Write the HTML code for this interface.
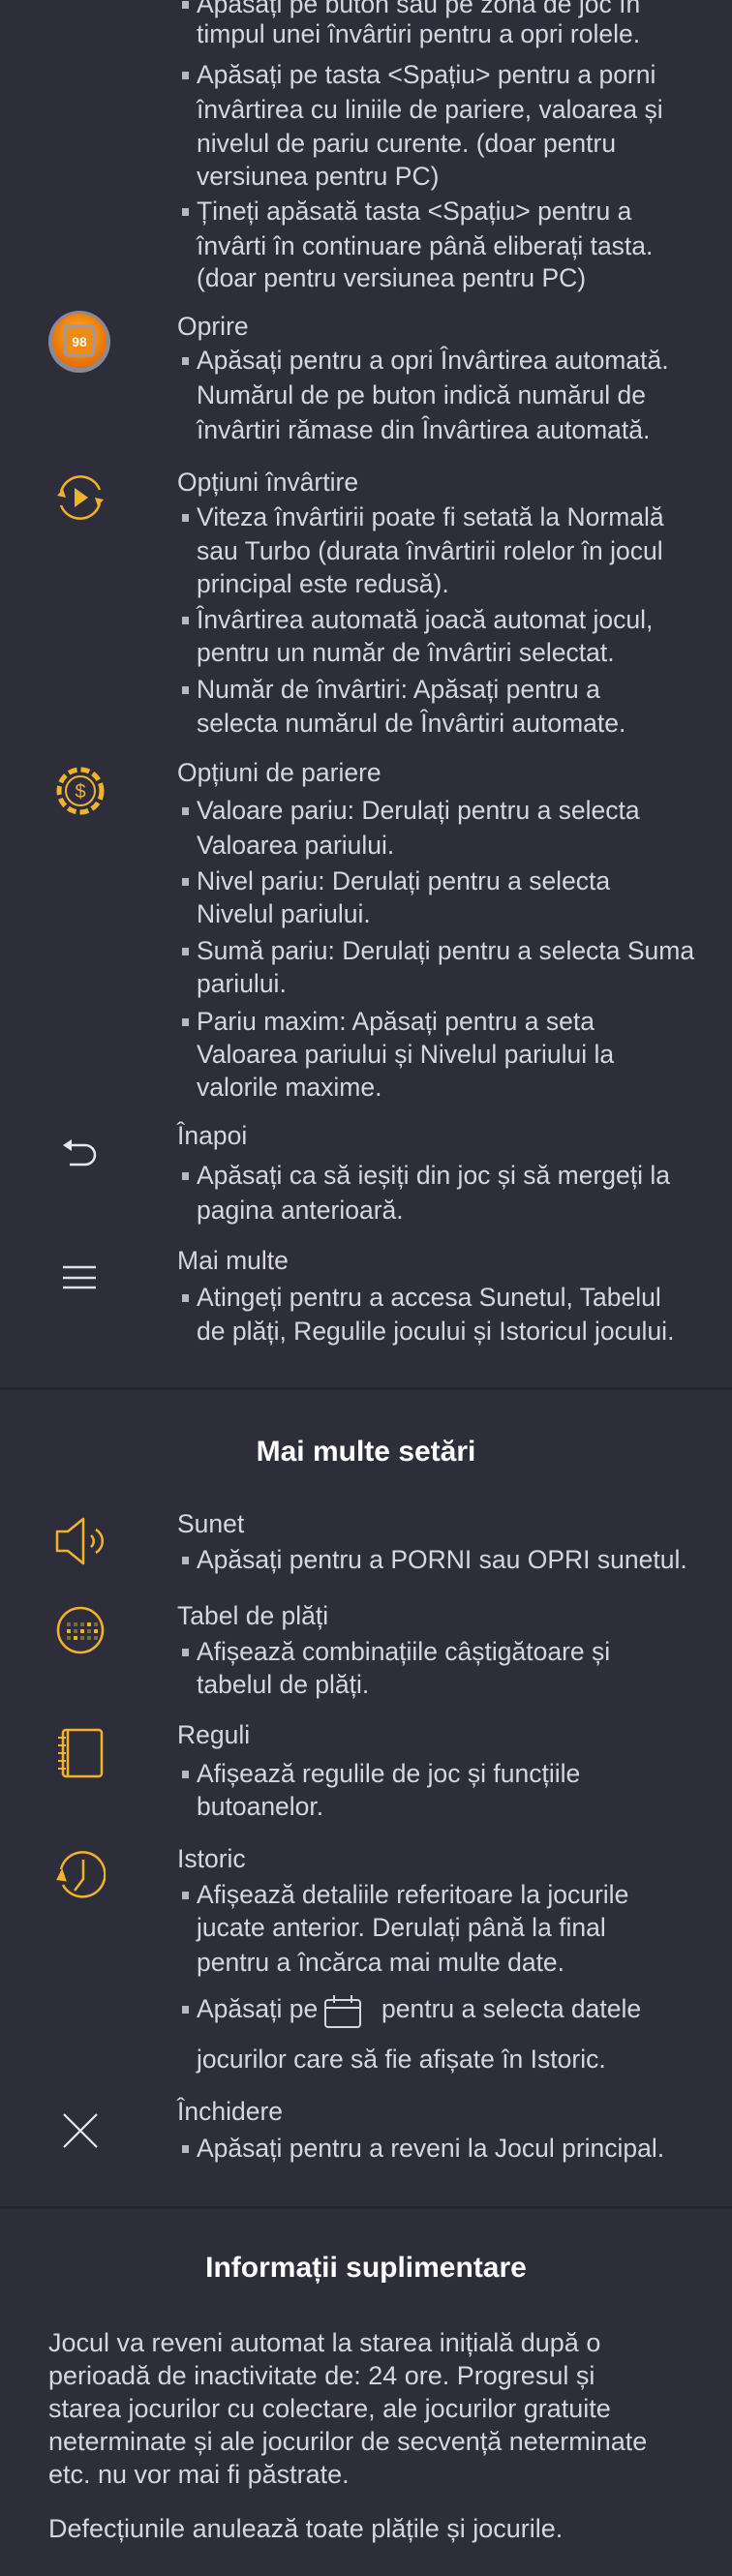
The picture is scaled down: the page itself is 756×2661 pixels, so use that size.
<!DOCTYPE html>
<html><head><meta charset="utf-8">
<style>
html,body{margin:0;padding:0;}
body{width:756px;height:2661px;background:#2e2e3b;position:relative;overflow:hidden;font-family:"Liberation Sans","DejaVu Sans",sans-serif;color:#d6d6dc;font-size:26.5px;}
.l{position:absolute;left:183px;height:35px;line-height:35px;white-space:nowrap;}
.b{left:203px;}
.b::before{content:"";position:absolute;left:-15px;top:14px;width:7px;height:8px;background:#b8b8c0;}
.p{position:absolute;left:50px;height:34px;line-height:34px;white-space:nowrap;font-size:27px;}
.h{position:absolute;left:0;width:756px;text-align:center;font-weight:bold;color:#fff;font-size:30px;line-height:36px;height:36px;}
.sep{position:absolute;left:0;width:756px;height:3px;background:#25252f;}
svg{position:absolute;}
</style></head><body>

<div class="l b" style="top:-13px">Apăsați pe buton sau pe zona de joc în</div>
<div class="l" style="top:18px;left:203px">timpul unei învârtiri pentru a opri rolele.</div>
<div class="l b" style="top:60px">Apăsați pe tasta &lt;Spațiu&gt; pentru a porni</div>
<div class="l" style="top:96px;left:203px">învârtirea cu liniile de pariere, valoarea și</div>
<div class="l" style="top:131px;left:203px">nivelul de pariu curente. (doar pentru</div>
<div class="l" style="top:165px;left:203px">versiunea pentru PC)</div>
<div class="l b" style="top:201px">Țineți apăsată tasta &lt;Spațiu&gt; pentru a</div>
<div class="l" style="top:237px;left:203px">învârti în continuare până eliberați tasta.</div>
<div class="l" style="top:270px;left:203px">(doar pentru versiunea pentru PC)</div>

<svg style="left:49px;top:320px" width="66" height="66" viewBox="0 0 66 66">
<defs><radialGradient id="og" cx="50%" cy="40%" r="60%"><stop offset="0" stop-color="#ffb02a"/><stop offset="1" stop-color="#e56a00"/></radialGradient></defs>
<circle cx="33" cy="33" r="32" fill="#8a8a96"/><circle cx="33" cy="32" r="28" fill="url(#og)"/>
<rect x="18" y="17" width="30" height="30" rx="4" fill="#f08a10" stroke="#9a9aa6" stroke-width="3"/>
<text x="33" y="38" text-anchor="middle" font-family="Liberation Sans" font-weight="bold" font-size="14" fill="#fff">98</text></svg>
<div class="l" style="top:320px">Oprire</div>
<div class="l b" style="top:355px">Apăsați pentru a opri Învârtirea automată.</div>
<div class="l" style="top:391px;left:203px">Numărul de pe buton indică numărul de</div>
<div class="l" style="top:427px;left:203px">învârtiri rămase din Învârtirea automată.</div>

<svg style="left:57px;top:488px" width="52" height="52" viewBox="0 0 52 52" fill="none" stroke="#f2b22e" stroke-width="2.5">
<path d="M6 20 A21 21 0 0 1 46 18"/><path d="M46 32 A21 21 0 0 1 6 34"/>
<path d="M2 24 L8 17 L11 26 Z" fill="#f2b22e" stroke="none"/><path d="M50 28 L44 35 L41 26 Z" fill="#f2b22e" stroke="none"/>
<path d="M20 16 L34 26 L20 36 Z" fill="#f2b22e" stroke="none"/></svg>
<div class="l" style="top:481px">Opțiuni învârtire</div>
<div class="l b" style="top:517px">Viteza învârtirii poate fi setată la Normală</div>
<div class="l" style="top:552px;left:203px">sau Turbo (durata învârtirii rolelor în jocul</div>
<div class="l" style="top:586px;left:203px">principal este redusă).</div>
<div class="l b" style="top:623px">Învârtirea automată joacă automat jocul,</div>
<div class="l" style="top:657px;left:203px">pentru un număr de învârtiri selectat.</div>
<div class="l b" style="top:695px">Număr de învârtiri: Apăsați pentru a</div>
<div class="l" style="top:730px;left:203px">selecta numărul de Învârtiri automate.</div>

<svg style="left:57px;top:791px" width="52" height="52" viewBox="0 0 52 52" fill="none">
<circle cx="26" cy="26" r="22" stroke="#f2b22e" stroke-width="5" stroke-dasharray="9 4"/>
<circle cx="26" cy="26" r="15" stroke="#f2b22e" stroke-width="2"/>
<text x="26" y="33" text-anchor="middle" font-family="Liberation Sans" font-size="20" fill="#f2b22e">$</text></svg>
<div class="l" style="top:781px">Opțiuni de pariere</div>
<div class="l b" style="top:820px">Valoare pariu: Derulați pentru a selecta</div>
<div class="l" style="top:856px;left:203px">Valoarea pariului.</div>
<div class="l b" style="top:893px">Nivel pariu: Derulați pentru a selecta</div>
<div class="l" style="top:927px;left:203px">Nivelul pariului.</div>
<div class="l b" style="top:965px">Sumă pariu: Derulați pentru a selecta Suma</div>
<div class="l" style="top:999px;left:203px">pariului.</div>
<div class="l b" style="top:1038px">Pariu maxim: Apăsați pentru a seta</div>
<div class="l" style="top:1072px;left:203px">Valoarea pariului și Nivelul pariului la</div>
<div class="l" style="top:1106px;left:203px">valorile maxime.</div>

<svg style="left:60px;top:1175px" width="44" height="32" viewBox="0 0 44 32" fill="none" stroke="#e8e8ee" stroke-width="2.5">
<path d="M12 8 H28 A10 10 0 0 1 28 28 H12"/><path d="M5 8 L14 2 L14 14 Z" fill="#e8e8ee" stroke="none"/></svg>
<div class="l" style="top:1156px">Înapoi</div>
<div class="l b" style="top:1197px">Apăsați ca să ieșiți din joc și să mergeți la</div>
<div class="l" style="top:1233px;left:203px">pagina anterioară.</div>

<svg style="left:64px;top:1306px" width="36" height="28" viewBox="0 0 36 28" stroke="#e0e0e6" stroke-width="2.5">
<path d="M1 3 H35 M1 14 H35 M1 24 H35"/></svg>
<div class="l" style="top:1285px">Mai multe</div>
<div class="l b" style="top:1323px">Atingeți pentru a accesa Sunetul, Tabelul</div>
<div class="l" style="top:1358px;left:203px">de plăți, Regulile jocului și Istoricul jocului.</div>

<div class="sep" style="top:1433px"></div>
<div class="h" style="top:1482px">Mai multe setări</div>

<svg style="left:56px;top:1566px" width="54" height="52" viewBox="0 0 54 52" fill="none" stroke="#f2b22e" stroke-width="2.5" stroke-linejoin="round">
<path d="M3 16 H14 L30 3 V49 L14 36 H3 Z"/><path d="M38 20 A8 8 0 0 1 38 32"/><path d="M43 14 A14 14 0 0 1 43 38"/></svg>
<div class="l" style="top:1557px">Sunet</div>
<div class="l b" style="top:1594px">Apăsați pentru a PORNI sau OPRI sunetul.</div>

<svg style="left:57px;top:1658px" width="52" height="52" viewBox="0 0 52 52">
<circle cx="26" cy="26" r="23" fill="none" stroke="#f2b22e" stroke-width="2.5"/>
<g fill="#7a6a40"><rect x="12" y="18" width="4" height="4"/><rect x="19" y="18" width="4" height="4"/><rect x="26" y="18" width="4" height="4"/><rect x="40" y="18" width="4" height="4"/><rect x="19" y="25" width="4" height="4"/><rect x="33" y="25" width="4" height="4"/><rect x="12" y="32" width="4" height="4"/><rect x="26" y="32" width="4" height="4"/><rect x="33" y="32" width="4" height="4"/><rect x="40" y="32" width="4" height="4"/></g>
<g fill="#f2b22e"><rect x="33" y="18" width="4" height="4"/><rect x="12" y="25" width="4" height="4"/><rect x="26" y="25" width="4" height="4"/><rect x="40" y="25" width="4" height="4"/><rect x="19" y="32" width="4" height="4"/></g></svg>
<div class="l" style="top:1652px">Tabel de plăți</div>
<div class="l b" style="top:1689px">Afișează combinațiile câștigătoare și</div>
<div class="l" style="top:1723px;left:203px">tabelul de plăți.</div>

<svg style="left:58px;top:1785px" width="50" height="52" viewBox="0 0 50 52" fill="none" stroke="#f2b22e" stroke-width="2.5">
<rect x="7" y="2" width="40" height="48" rx="3"/><path d="M12 2 V50"/>
<path d="M2 10 H10 M2 18 H10 M2 26 H10 M2 34 H10 M2 42 H10" stroke-width="2"/></svg>
<div class="l" style="top:1775px">Reguli</div>
<div class="l b" style="top:1815px">Afișează regulile de joc și funcțiile</div>
<div class="l" style="top:1849px;left:203px">butoanelor.</div>

<svg style="left:57px;top:1911px" width="52" height="52" viewBox="0 0 52 52" fill="none" stroke="#f2b22e" stroke-width="2.5">
<path d="M8 36 A23 23 0 1 0 6 20"/><path d="M3 30 L7 22 L10 31 Z" fill="#f2b22e"/>
<path d="M29 10 V30 L20 42"/></svg>
<div class="l" style="top:1903px">Istoric</div>
<div class="l b" style="top:1940px">Afișează detaliile referitoare la jocurile</div>
<div class="l" style="top:1974px;left:203px">jucate anterior. Derulați până la final</div>
<div class="l" style="top:2010px;left:203px">pentru a încărca mai multe date.</div>
<div class="l b" style="top:2058px">Apăsați pe</div>
<svg style="left:334px;top:2060px" width="40" height="36" viewBox="0 0 40 36" fill="none" stroke="#d6d6dc" stroke-width="2">
<rect x="2" y="6" width="36" height="28" rx="3"/><path d="M2 14 H38 M11 1 V9 M29 1 V9"/></svg>
<div class="l" style="top:2058px;left:394px">pentru a selecta datele</div>
<div class="l" style="top:2110px;left:203px">jocurilor care să fie afișate în Istoric.</div>

<svg style="left:64px;top:2182px" width="38" height="38" viewBox="0 0 38 38" stroke="#e8e8ee" stroke-width="2.2">
<path d="M2 2 L36 36 M36 2 L2 36"/></svg>
<div class="l" style="top:2164px">Închidere</div>
<div class="l b" style="top:2202px">Apăsați pentru a reveni la Jocul principal.</div>

<div class="sep" style="top:2279px"></div>
<div class="h" style="top:2325px">Informații suplimentare</div>

<div class="p" style="top:2403px">Jocul va reveni automat la starea inițială după o</div>
<div class="p" style="top:2437px">perioadă de inactivitate de: 24 ore. Progresul și</div>
<div class="p" style="top:2471px">starea jocurilor cu colectare, ale jocurilor gratuite</div>
<div class="p" style="top:2505px">neterminate și ale jocurilor de secvență neterminate</div>
<div class="p" style="top:2539px">etc. nu vor mai fi păstrate.</div>
<div class="p" style="top:2595px">Defecțiunile anulează toate plățile și jocurile.</div>

</body></html>
